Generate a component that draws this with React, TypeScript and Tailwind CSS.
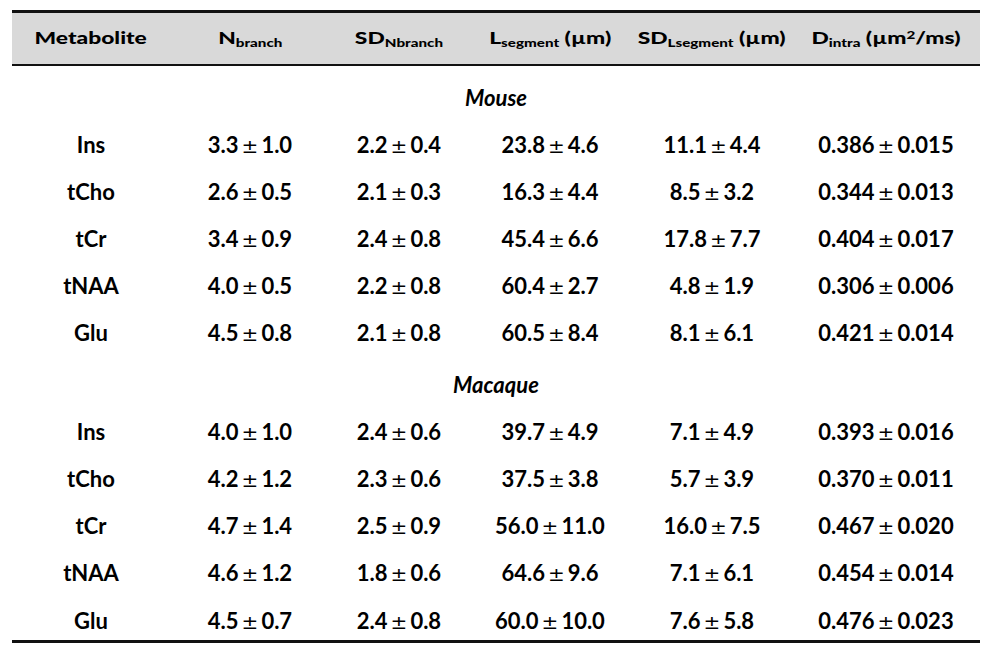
import React from "react";

type Row = [string, string, string, string, string, string, string, string, string, string, string];

const mouse: Row[] = [
  ["Ins", "3.3", "1.0", "2.2", "0.4", "23.8", "4.6", "11.1", "4.4", "0.386", "0.015"],
  ["tCho", "2.6", "0.5", "2.1", "0.3", "16.3", "4.4", "8.5", "3.2", "0.344", "0.013"],
  ["tCr", "3.4", "0.9", "2.4", "0.8", "45.4", "6.6", "17.8", "7.7", "0.404", "0.017"],
  ["tNAA", "4.0", "0.5", "2.2", "0.8", "60.4", "2.7", "4.8", "1.9", "0.306", "0.006"],
  ["Glu", "4.5", "0.8", "2.1", "0.8", "60.5", "8.4", "8.1", "6.1", "0.421", "0.014"],
];

const macaque: Row[] = [
  ["Ins", "4.0", "1.0", "2.4", "0.6", "39.7", "4.9", "7.1", "4.9", "0.393", "0.016"],
  ["tCho", "4.2", "1.2", "2.3", "0.6", "37.5", "3.8", "5.7", "3.9", "0.370", "0.011"],
  ["tCr", "4.7", "1.4", "2.5", "0.9", "56.0", "11.0", "16.0", "7.5", "0.467", "0.020"],
  ["tNAA", "4.6", "1.2", "1.8", "0.6", "64.6", "9.6", "7.1", "6.1", "0.454", "0.014"],
  ["Glu", "4.5", "0.7", "2.4", "0.8", "60.0", "10.0", "7.6", "5.8", "0.476", "0.023"],
];

const grid = "grid grid-cols-[158px_160px_138px_164px_160px_188px]";

function PM({ a, b }: { a: string; b: string }) {
  return (
    <span className="whitespace-nowrap">
      {a}
      <span className="font-['DejaVu_Sans',sans-serif] font-normal text-[20px] mx-[3px]">±</span>
      {b}
    </span>
  );
}

function DataRow({ r, last }: { r: Row; last?: boolean }) {
  return (
    <div className={`${grid} ${last ? "h-[44px] pt-[5px]" : "h-[47px]"} items-center`}>
      <div className="text-center">{r[0]}</div>
      <div className="text-center"><PM a={r[1]} b={r[2]} /></div>
      <div className="text-center"><PM a={r[3]} b={r[4]} /></div>
      <div className="text-center"><PM a={r[5]} b={r[6]} /></div>
      <div className="text-center"><PM a={r[7]} b={r[8]} /></div>
      <div className="text-center"><PM a={r[9]} b={r[10]} /></div>
    </div>
  );
}

function H({ children }: { children: React.ReactNode }) {
  return (
    <div className="flex justify-center">
      <span className="inline-block whitespace-nowrap scale-x-[1.38] font-black text-[16.5px]">{children}</span>
    </div>
  );
}

const sub = "text-[11px] relative top-[3px] align-baseline";

export default function App() {
  return (
    <div className="w-[992px] h-[654px] bg-white pt-[10px] pl-[12px] font-['Lato','Carlito','Liberation_Sans',sans-serif] text-black">
      <div className="w-[968px]">
        <div className={`${grid} h-[56px] items-center bg-[#d9d9d9] border-t-[3px] border-b-2 border-[#111]`}>
          <H>Metabolite</H>
          <H>N<sub className={sub}>branch</sub></H>
          <H>SD<sub className={sub}>Nbranch</sub></H>
          <H>L<sub className={sub}>segment</sub> (µm)</H>
          <H>SD<sub className={sub}>Lsegment</sub> (µm)</H>
          <H>D<sub className={sub}>intra</sub> (µm<sup className="text-[11px] relative -top-[5px]">2</sup>/ms)</H>
        </div>
        <div className="pt-[8px] text-[22px] font-bold border-b-[3px] border-[#111]">
          <div className="h-[47px] flex items-center justify-center italic">Mouse</div>
          {mouse.map((r) => (
            <DataRow key={"m" + r[0]} r={r} />
          ))}
          <div className="h-[47px] mt-[5px] flex items-center justify-center italic">Macaque</div>
          {macaque.map((r, i) => (
            <DataRow key={"q" + r[0]} r={r} last={i === macaque.length - 1} />
          ))}
        </div>
      </div>
    </div>
  );
}
